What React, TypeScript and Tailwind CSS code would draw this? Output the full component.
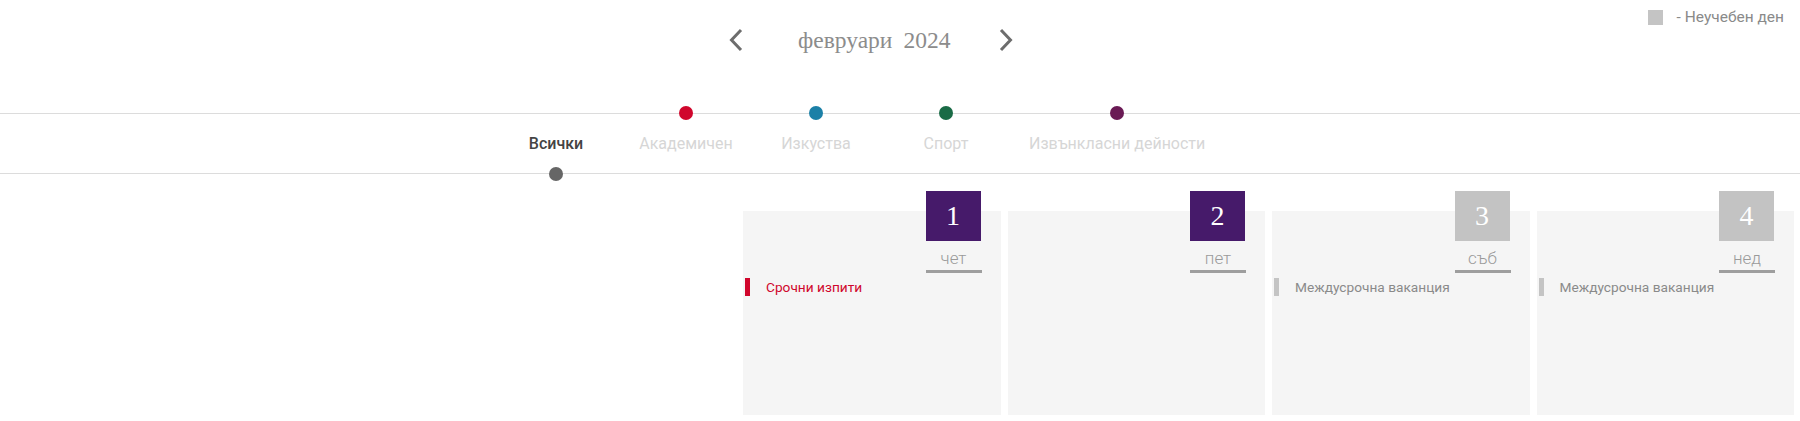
import React from "react";

const cats = [
  { label: "Всички", color: "#666666", active: true },
  { label: "Академичен", color: "#d0062c", active: false },
  { label: "Изкуства", color: "#1b80a7", active: false },
  { label: "Спорт", color: "#1a6b46", active: false },
  { label: "Извънкласни дейности", color: "#6a1a55", active: false },
];

const days = [
  { n: "1", d: "чет", holiday: false, ev: { t: "Срочни изпити", c: "text-[#d0062c]", b: "bg-[#d0062c]" } },
  { n: "2", d: "пет", holiday: false, ev: null },
  { n: "3", d: "съб", holiday: true, ev: { t: "Междусрочна ваканция", c: "text-[#8a8a8a]", b: "bg-[#c4c4c4]" } },
  { n: "4", d: "нед", holiday: true, ev: { t: "Междусрочна ваканция", c: "text-[#8a8a8a]", b: "bg-[#c4c4c4]" } },
];

function Chevron({ dir }: { dir: "l" | "r" }) {
  return (
    <svg width="14" height="24" viewBox="0 0 14 24" fill="none">
      <path
        d={dir === "l" ? "M12 2 L2.5 12 L12 22" : "M2 2 L11.5 12 L2 22"}
        stroke="#6d6d6d"
        strokeWidth="3"
        strokeLinecap="butt"
        strokeLinejoin="miter"
      />
    </svg>
  );
}

export default function App() {
  return (
    <div className="relative w-[1800px] h-[421px] bg-white overflow-hidden font-['Roboto',sans-serif]">
      {/* Header */}
      <div className="relative h-[113px]">
        <div className="flex items-center pt-[28px] pl-[729px]">
          <Chevron dir="l" />
          <div className="ml-[55px] flex items-center gap-[11px] text-[23.5px] leading-[24px] text-[#8c8c8c] font-['Liberation_Serif',serif]">
            <span>февруари</span>
            <span>2024</span>
          </div>
          <div className="ml-[49px]">
            <Chevron dir="r" />
          </div>
        </div>
        <div className="absolute top-[10px] right-[16px] flex items-center">
          <span className="w-[15px] h-[15px] bg-[#c4c4c4]" />
          <span className="ml-[14px] text-[15.5px] leading-[15px] text-[#8a8a8a]">- Неучебен ден</span>
        </div>
      </div>

      {/* Categories */}
      <div className="border-t border-b border-[#dcdcdc] h-[61px] flex pl-[491px]">
        {cats.map((c) => (
          <div
            key={c.label}
            className="relative min-w-[130px] px-[18px] flex items-center justify-center"
          >
            <span
              className={
                c.active
                  ? "text-[16px] font-medium text-[#444444]"
                  : "text-[16px] text-[#d6d6d6]"
              }
            >
              {c.label}
            </span>
            <span
              className={
                c.active
                  ? "absolute left-1/2 -translate-x-1/2 -bottom-[8px] w-[14px] h-[14px] rounded-full"
                  : "absolute left-1/2 -translate-x-1/2 -top-[8px] w-[14px] h-[14px] rounded-full"
              }
              style={{ backgroundColor: c.color }}
            />
          </div>
        ))}
      </div>

      {/* Days */}
      <div className="grid grid-cols-[repeat(4,257.5px)] gap-[7px] pl-[743px] pt-[37px]">
        {days.map((d) => (
          <div key={d.n} className="h-[204px] bg-[#f5f5f5] flex flex-col">
            <div
              className={
                (d.holiday ? "bg-[#c3c3c3]" : "bg-[#461a6a]") +
                " self-end mr-[20px] -mt-[20px] w-[55px] h-[50px] flex items-center justify-center text-white text-[28px] font-['Liberation_Serif',serif]"
              }
            >
              {d.n}
            </div>
            <div className="self-end mr-[19px] mt-[5px] w-[56px] h-[27px] border-b-[3px] border-[#9e9e9e] text-center text-[17px] leading-[24px] font-light text-[#9a9a9a]">
              {d.d}
            </div>
            {d.ev && (
              <div className="mt-[5px] flex items-center">
                <span className={"ml-[2px] w-[5px] h-[18px] " + d.ev.b} />
                <span className={"ml-[16px] text-[13.7px] leading-[18px] " + d.ev.c}>{d.ev.t}</span>
              </div>
            )}
          </div>
        ))}
      </div>
    </div>
  );
}
